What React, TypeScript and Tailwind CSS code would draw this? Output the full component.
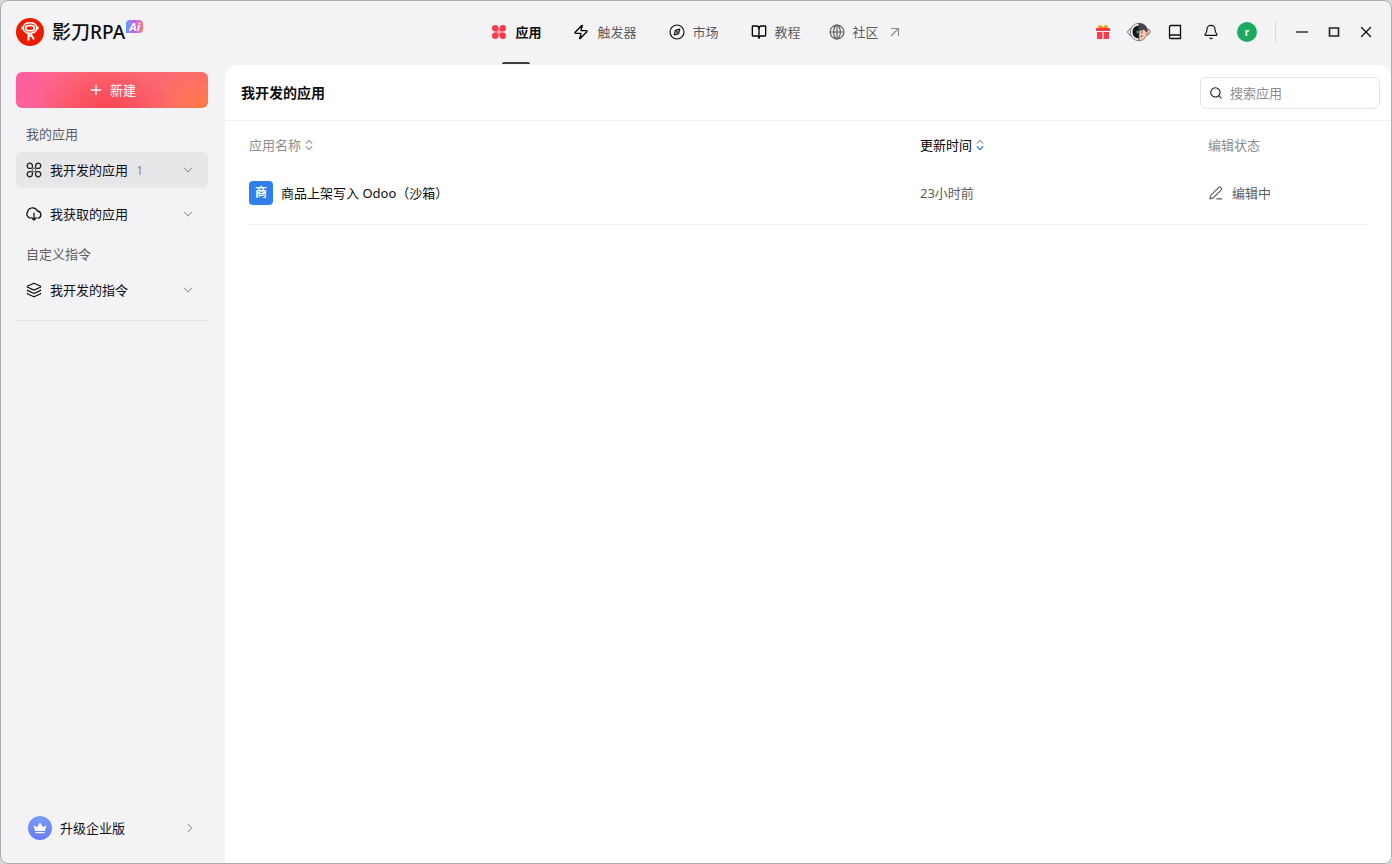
import { useState } from "react";
import type { ReactNode } from "react";
import {
  Bell,
  BookOpen,
  ChevronDown,
  ChevronRight,
  Layers,
  Plus,
  Search,
  X,
  Zap,
} from "lucide-react";

type TabKey = "apps" | "triggers" | "market" | "tutorials" | "community";

const TABS: { key: TabKey; label: string; icon: ReactNode; external?: boolean }[] = [
  { key: "apps", label: "应用", icon: <CloverIcon /> },
  { key: "triggers", label: "触发器", icon: <Zap size={16} strokeWidth={2} className="text-black" /> },
  { key: "market", label: "市场", icon: <CompassIcon /> },
  { key: "tutorials", label: "教程", icon: <BookOpen size={16} strokeWidth={2} className="text-black" /> },
  { key: "community", label: "社区", icon: <GlobeIcon />, external: true },
];

const APPS = [{ id: 1, badge: "商", name: "商品上架写入 Odoo（沙箱）", updated: "23小时前", status: "编辑中" }];

export default function App() {
  const [tab, setTab] = useState<TabKey>("apps");
  const [query, setQuery] = useState("");
  const rows = APPS.filter((a) => a.name.includes(query));

  return (
    <div className="h-screen bg-[#d6d9dc] font-['Noto_Sans','Noto_Sans_CJK_SC',sans-serif] text-[13px] leading-5 text-[#0e0e10]">
      <div className="flex h-full flex-col gap-px overflow-hidden rounded-lg border border-[#adadb0] bg-[#f3f3f6]">
        <Header tab={tab} onTab={setTab} />
        <div className="flex min-h-0 flex-1">
          <Sidebar />
          <main className="min-w-0 flex-1 rounded-t-xl bg-white">
            <div className="flex h-14 items-center justify-between border-b border-[#f0f0f2] pr-[11px] pl-4">
              <h1 className="text-sm font-bold">我开发的应用</h1>
              <label className="flex h-8 w-[180px] items-center gap-[7px] rounded-md border border-[#e3e3e5] px-2">
                <Search size={14} strokeWidth={1.75} className="shrink-0" />
                <input
                  type="text"
                  aria-label="搜索应用"
                  placeholder="搜索应用"
                  value={query}
                  onChange={(e) => setQuery(e.target.value)}
                  className="w-full min-w-0 bg-transparent outline-none placeholder:text-[#8e8e90]"
                />
              </label>
            </div>
            <div className="pr-[23px] pl-6">
              <table className="w-full table-fixed text-left">
                <colgroup>
                  <col />
                  <col className="w-72" />
                  <col className="w-40" />
                </colgroup>
                <thead>
                  <tr className="h-12 text-[#8e8e90]">
                    <th className="font-normal">
                      <SortButton label="应用名称" />
                    </th>
                    <th className="font-normal text-black">
                      <SortButton label="更新时间" desc />
                    </th>
                    <th className="font-normal">编辑状态</th>
                  </tr>
                </thead>
                <tbody>
                  {rows.map((app) => (
                    <tr key={app.id} className="border-b border-[#f0f0f2]">
                      <td className="h-[55px] pb-[7px]">
                        <div className="flex items-center gap-2">
                          <span className="grid size-6 place-items-center rounded bg-[#2f80ed] text-xs font-bold text-white">
                            {app.badge}
                          </span>
                          <span>{app.name}</span>
                        </div>
                      </td>
                      <td className="h-[55px] pb-[7px] text-[#5d5d60]">{app.updated}</td>
                      <td className="h-[55px] pb-[7px] text-[#5d5d60]">
                        <div className="flex items-center gap-2">
                          <EditIcon />
                          {app.status}
                        </div>
                      </td>
                    </tr>
                  ))}
                </tbody>
              </table>
            </div>
          </main>
        </div>
      </div>
    </div>
  );
}

function Header({ tab, onTab }: { tab: TabKey; onTab: (key: TabKey) => void }) {
  return (
    <header className="flex h-[63px] shrink-0 items-center justify-between pr-[17px] pb-px pl-[15px]">
      <div className="flex flex-1 items-center gap-2">
        <LogoIcon />
        <div className="flex items-start">
          <span className="text-[19px] leading-6 font-medium whitespace-nowrap">影刀RPA</span>
          <span className="ml-px grid h-[13px] w-[17px] place-items-center rounded-tl-sm rounded-tr-sm rounded-br-sm bg-linear-to-r from-[#4d9dff] via-[#c45cf0] to-[#ff7a70] font-['Liberation_Sans',sans-serif] text-[11px] leading-3 font-bold text-white italic">
            Ai
          </span>
        </div>
      </div>

      <nav className="flex h-full gap-8 pl-1">
        {TABS.map((t) => (
          <button
            key={t.key}
            type="button"
            onClick={() => onTab(t.key)}
            className={`relative flex items-center gap-2 ${
              tab === t.key ? "font-bold" : "text-[#5d5d60]"
            } ${t.external ? "-ml-1" : ""}`}
          >
            {t.icon}
            {t.label}
            {t.external && <ExternalIcon />}
            {tab === t.key && (
              <span className="absolute -bottom-px left-1/2 h-0.5 w-7 -translate-x-1/2 rounded-t-sm bg-[#3c3c40]" />
            )}
          </button>
        ))}
      </nav>

      <div className="flex flex-1 items-center justify-end gap-4">
        <IconButton label="礼物">
          <GiftIcon />
        </IconButton>
        <IconButton label="助手">
          <AssistantIcon />
        </IconButton>
        <IconButton label="文档">
          <DocIcon />
        </IconButton>
        <IconButton label="通知">
          <Bell size={16} strokeWidth={1.75} className="shrink-0" />
        </IconButton>
        <IconButton label="账号">
          <span className="grid size-5 place-items-center rounded-full bg-[#1caa5e] text-[10px] leading-5 font-bold text-white">
            r
          </span>
        </IconButton>
        <div className="ml-0.5 flex h-5 items-center gap-4 border-l border-[#d8d8dc] pl-[18px]">
          <IconButton label="最小化" narrow>
            <MinimizeIcon />
          </IconButton>
          <IconButton label="最大化" narrow>
            <MaximizeIcon />
          </IconButton>
          <IconButton label="关闭" narrow>
            <X size={18} strokeWidth={1.75} className="shrink-0" />
          </IconButton>
        </div>
      </div>
    </header>
  );
}

function IconButton({
  label,
  narrow,
  children,
}: {
  label: string;
  narrow?: boolean;
  children: ReactNode;
}) {
  return (
    <button
      type="button"
      aria-label={label}
      className={`flex h-6 items-center justify-center ${narrow ? "w-4" : "w-5"}`}
    >
      {children}
    </button>
  );
}

function Sidebar() {
  return (
    <aside className="flex w-56 shrink-0 flex-col pt-[7px] pr-[17px] pb-[15px] pl-[15px]">
      <button
        type="button"
        className="flex h-9 shrink-0 items-center justify-center gap-1.5 rounded-md bg-[radial-gradient(70px_50px_at_47%_110%,#fb4452_0%,#fb445200_100%),radial-gradient(60px_44px_at_100%_100%,#ff7a45_0%,#ff7a4500_100%),linear-gradient(100deg,#ff5ea2_0%,#fb6a78_38%,#fb6a70_100%)] text-white"
      >
        <Plus size={16} strokeWidth={2} />
        新建
      </button>

      <h2 className="mt-4 px-2.5 text-[#5d5d60]">我的应用</h2>
      <div className="mt-2 flex flex-col gap-2">
        <SideItem icon={<CommandIcon />} label="我开发的应用" count={1} active />
        <SideItem icon={<CloudIcon />} label="我获取的应用" />
      </div>
      <h2 className="mt-3 px-2.5 text-[#5d5d60]">自定义指令</h2>
      <div className="mt-2 border-b border-[#e3e3e6] pb-3">
        <SideItem icon={<Layers size={16} strokeWidth={1.75} />} label="我开发的指令" />
      </div>

      <button type="button" className="mt-auto flex h-10 items-center gap-2 pr-[11px] pl-3">
        <CrownBadge />
        升级企业版
        <ChevronRight size={14} strokeWidth={1.75} className="ml-auto text-[#8e8e90]" />
      </button>
    </aside>
  );
}

function SideItem({
  icon,
  label,
  count,
  active,
}: {
  icon: ReactNode;
  label: string;
  count?: number;
  active?: boolean;
}) {
  return (
    <button
      type="button"
      className={`flex h-9 w-full items-center gap-2 rounded-md pr-[13px] pl-2.5 ${
        active ? "bg-[#e7e7e9]" : ""
      }`}
    >
      {icon}
      {label}
      {count !== undefined && <span className="text-[#8e8e90]">{count}</span>}
      <ChevronDown size={14} strokeWidth={1.75} className="ml-auto text-[#8e8e90]" />
    </button>
  );
}

function SortButton({ label, desc }: { label: string; desc?: boolean }) {
  return (
    <button type="button" className="flex items-center gap-1">
      {label}
      <svg width="8" height="12" viewBox="0 0 8 12" fill="none" strokeWidth="1.2">
        <path d="M.8 4.6 4 1.4l3.2 3.2" stroke="#9b9b9e" />
        <path d="M.8 7.4 4 10.6l3.2-3.2" stroke={desc ? "#1677ff" : "#9b9b9e"} />
      </svg>
    </button>
  );
}

function LogoIcon() {
  return (
    <svg width="28" height="28" viewBox="0 0 28 28" fill="none" className="shrink-0">
      <circle cx="14" cy="14" r="14" fill="#eb1c00" />
      <path d="M7.5 8.5C9 3.5 19 3.5 20.5 8.5v3c-1.5 5-11.5 5-13 0z" stroke="#fff" strokeWidth="1.5" />
      <rect x="9.7" y="7.7" width="8.6" height="5" rx="2.5" stroke="#fff" strokeWidth="1.7" />
      <path d="M6.2 8.5v3M21.8 8.5v3" stroke="#fff" strokeWidth="1.5" />
      <path d="M12.5 15v7.5M13 18.5l2.2-1.5 2.8 4.5" stroke="#fff" strokeWidth="2" />
    </svg>
  );
}

function CloverIcon() {
  return (
    <svg width="16" height="16" viewBox="0 0 16 16" fill="#fb3b4c">
      <path d="M4 4h8v8H4z" opacity=".5" />
      <circle cx="4.2" cy="4.2" r="3.2" />
      <circle cx="11.8" cy="4.2" r="3.2" />
      <circle cx="4.2" cy="11.8" r="3.2" />
      <circle cx="11.8" cy="11.8" r="3.2" />
    </svg>
  );
}

function CompassIcon() {
  return (
    <svg width="16" height="16" viewBox="0 0 16 16" fill="none" stroke="#111" strokeWidth="1.2" strokeLinejoin="round">
      <circle cx="8" cy="8" r="7" />
      <path d="M10.8 5.2 9.6 9.6 5.2 10.8 6.4 6.4z" />
      <circle cx="8" cy="8" r=".4" />
    </svg>
  );
}

function GlobeIcon() {
  return (
    <svg width="16" height="16" viewBox="0 0 16 16" fill="none" stroke="#5d5d60" strokeWidth="1.2">
      <circle cx="8" cy="8" r="6.9" />
      <ellipse cx="8" cy="8" rx="3.3" ry="6.9" />
      <path d="M1 8h14M8 1v14" />
    </svg>
  );
}

function ExternalIcon() {
  return (
    <svg width="16" height="16" viewBox="0 0 16 16" fill="none" stroke="#8e8e90" strokeWidth="1.2">
      <path d="M4 4.5h7.5V12M11.500 4.500 4 12" />
    </svg>
  );
}

function MinimizeIcon() {
  return (
    <svg width="12" height="12" viewBox="0 0 12 12" className="shrink-0">
      <path d="M0 6h12" stroke="#333" strokeWidth="1.5" />
    </svg>
  );
}

function MaximizeIcon() {
  return (
    <svg width="12" height="12" viewBox="0 0 12 12" fill="none" className="shrink-0">
      <path d="M1.5 2h9v8h-9z" stroke="#222" strokeWidth="1.6" />
    </svg>
  );
}

function CommandIcon() {
  return (
    <svg width="16" height="16" viewBox="0 0 16 16" fill="none" stroke="#222" strokeWidth="1.3">
      <path d="M6.4 6.4H3.9a2.600 2.600 0 1 1 2.500-2.500zM9.600 6.400h2.500a2.600 2.600 0 1 0-2.500-2.500zM6.400 9.600H3.900a2.600 2.600 0 1 0 2.500 2.500zM9.600 9.600h2.500a2.600 2.600 0 1 1-2.500 2.500z" />
      <path d="M6.4 6.4h3.2v3.2H6.4z" stroke="#777" />
    </svg>
  );
}

function CloudIcon() {
  return (
    <svg width="16" height="16" viewBox="0 0 16 16" fill="none" stroke="#111" strokeWidth="1.3" strokeLinecap="round">
      <path d="M4 12A4 4 0 0 1 1.6 5.8 5.2 5.2 0 0 1 11.4 5a3.7 3.7 0 0 1 .9 7.2" />
      <path d="M8 7.2v6.6M5.7 11.7 8 14l2.3-2.3" />
    </svg>
  );
}

function EditIcon() {
  return (
    <svg width="16" height="16" viewBox="0 0 16 16" fill="none" stroke="#5d5d60" strokeWidth="1.2" strokeLinejoin="round">
      <path d="M2 13.8l.7-3.4 8.1-8.1a1.2 1.2 0 0 1 1.7 0l.8.8a1.2 1.2 0 0 1 0 1.7l-8.1 8.1zM8.5 13.8H14" />
    </svg>
  );
}

function GiftIcon() {
  return (
    <svg width="16" height="16" viewBox="0 0 16 16">
      <path d="M2.8 2.2 5.6 1 8 3l2.4-2 2.8 1.2-1 2.3H3.8z" fill="#ff9500" />
      <path d="M1 4h14v3H1zM2 8h5.4v7H3a1 1 0 0 1-1-1zM8.6 8H14v6a1 1 0 0 1-1 1H8.6z" fill="#fb3b4c" />
    </svg>
  );
}

function AssistantIcon() {
  return (
    <svg width="24" height="20" viewBox="0 0 24 20" className="shrink-0">
      <path d="M4.500 5.500.8 9v2l3.700 3.500z" fill="#fff" stroke="#555" strokeWidth=".8" />
      <path d="M12 1.300a8.700 8.700 0 0 0 0 17.400z" fill="#fff" stroke="#555" strokeWidth=".8" />
      <path d="M12 3.500c-4.500 0-6.500 3-6.500 6.500s2 6.500 6.500 6.500z" fill="#15171b" />
      <path d="M19.500 7.500c2-.8 3.800 0 3.700 2s-1.700 4-3.700 3.500z" fill="#f8c9a8" stroke="#555" strokeWidth=".7" />
      <path d="M12 1.300c5 0 8.300 3.200 8.300 8s-3.300 9.400-8.300 9.400z" fill="#f8c9a8" stroke="#555" strokeWidth=".7" />
      <path d="M12 1.300c5 0 8.700 3.300 8.700 8l-1.700.7-2.200-2.500c-1.300 1.300-2.800 1.300-4.800 1.300z" fill="#46474b" />
      <path d="M10.400 8.800v2.400" stroke="#1bb9b2" strokeWidth="1.6" />
      <path d="M14.800 9.500v2M13.300 14.200h2.400" stroke="#444" strokeWidth=".9" />
    </svg>
  );
}

function DocIcon() {
  return (
    <svg width="16" height="16" viewBox="0 0 16 16" fill="none" stroke="#111" strokeWidth="1.3">
      <path d="M4 1.5h9.500v13h-10a1 1 0 0 1-1-1V3A1.500 1.500 0 0 1 4 1.500zM2.500 12.500q0-1.500 1.500-1.500h9.500" />
    </svg>
  );
}

function CrownBadge() {
  return (
    <svg width="24" height="24" viewBox="0 0 24 24" className="shrink-0">
      <defs>
        <linearGradient id="crown" x1="0" y1="0" x2="0" y2="1">
          <stop stopColor="#7b9cf8" />
          <stop offset="1" stopColor="#667df5" />
        </linearGradient>
      </defs>
      <circle cx="12" cy="12" r="12" fill="url(#crown)" />
      <path d="M7 15 5.600 9.200 9 11.200 12 6.500l3 4.700 3.400-2L17 15z" fill="#fff" />
      <path d="M7.500 16.700h9" stroke="#fff" strokeWidth="1.200" />
    </svg>
  );
}
